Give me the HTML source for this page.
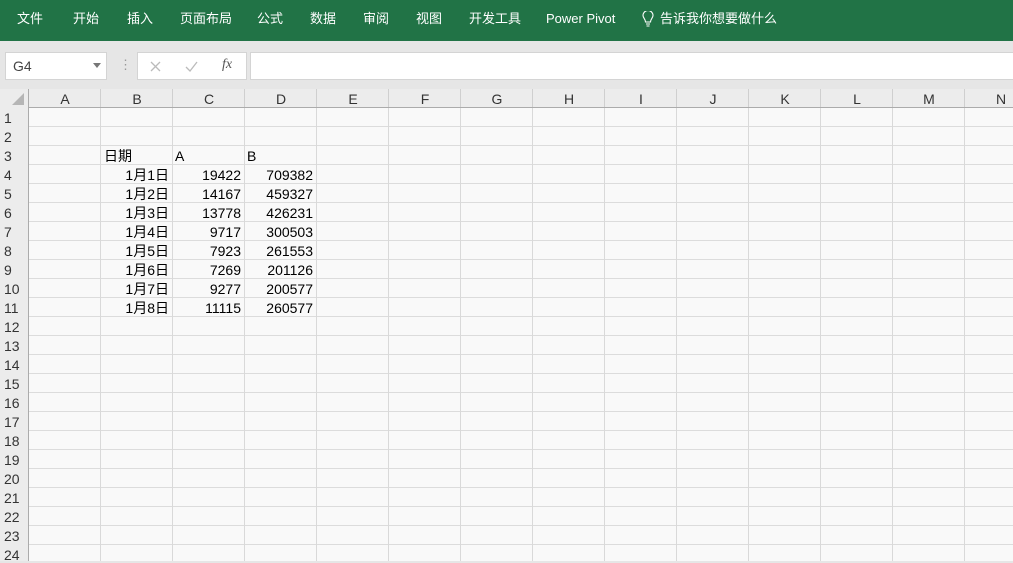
<!DOCTYPE html>
<html><head><meta charset="utf-8"><style>
*{margin:0;padding:0;box-sizing:border-box}
body{width:1013px;height:561px;overflow:hidden;background:#e6e6e6;font-family:"Liberation Sans","Noto Sans CJK SC",sans-serif;position:relative}
.top{position:absolute;left:0;top:0;width:1013px;height:41px;background:#217346;color:#fff;font-size:13px}
.top span{position:absolute;top:8px}
.top span.l{top:11px}
.fb{position:absolute;top:52px;height:28px;background:#fff;border:1px solid #d4d4d4}
.grid{position:absolute;left:29px;top:108px;width:984px;height:453px;background-color:#f9f9f9;
background-image:linear-gradient(to right,transparent 71px,#d9d9d9 71px),linear-gradient(to bottom,transparent 18px,#dcdcdc 18px);
background-size:72px 19px,72px 19px}
.ch{position:absolute;top:89px;left:29px;width:984px;height:19px;background:#ececec;border-bottom:1px solid #ababab;
background-image:linear-gradient(to right,transparent 71px,#cfcfcf 71px);background-size:72px 19px}
.ch span{position:absolute;width:72px;text-align:center;top:2px;font-size:14px;color:#333}
.rh{position:absolute;left:0;top:89px;width:29px;height:472px;background:#ececec;border-right:1px solid #ababab}
.rh span{position:absolute;left:4px;font-size:14px;color:#333}
.c{position:absolute;font-size:14px;color:#000;height:19px;line-height:19px}
.r{text-align:right;width:68px}
</style></head><body>
<div class="top">
<span style="left:17px">文件</span><span style="left:73px">开始</span><span style="left:127px">插入</span><span style="left:180px">页面布局</span><span style="left:257px">公式</span><span style="left:310px">数据</span><span style="left:363px">审阅</span><span style="left:416px">视图</span><span style="left:469px">开发工具</span><span class="l" style="left:546px">Power Pivot</span>
<svg style="position:absolute;left:642px;top:11px" width="12" height="16" viewBox="0 0 12 16"><path d="M3.5 11 C3.5 8 1 7 1 4.5 A5 5 0 0 1 11 4.5 C11 7 8.5 8 8.5 11 Z M4 13 H8 M4.5 15 H7.5" fill="none" stroke="#fff" stroke-width="1.1"/></svg>
<span style="left:660px">告诉我你想要做什么</span>
</div>
<div class="fb" style="left:5px;width:102px"><span style="position:absolute;left:7px;top:5px;font-size:14px;color:#444">G4</span><span style="position:absolute;left:87px;top:10px;border:4px solid transparent;border-top:5px solid #777"></span></div>
<span style="position:absolute;left:119px;top:57px;color:#999;font-size:13px">⋮</span>
<div class="fb" style="left:137px;width:110px">
<svg style="position:absolute;left:12px;top:8px" width="11" height="11"><path d="M1 1 L10 10 M10 1 L1 10" stroke="#bbb" stroke-width="1.3"/></svg>
<svg style="position:absolute;left:47px;top:8px" width="13" height="11"><path d="M1 6 L5 10 L12 1" fill="none" stroke="#bbb" stroke-width="1.3"/></svg>
<span style="position:absolute;left:84px;top:4px;color:#555;font-size:14px;font-style:italic;font-family:'Liberation Serif',serif">fx</span></div>
<div class="fb" style="left:250px;width:770px"></div>
<div class="ch">
<span style="left:0">A</span><span style="left:72px">B</span><span style="left:144px">C</span><span style="left:216px">D</span><span style="left:288px">E</span><span style="left:360px">F</span><span style="left:432px">G</span><span style="left:504px">H</span><span style="left:576px">I</span><span style="left:648px">J</span><span style="left:720px">K</span><span style="left:792px">L</span><span style="left:864px">M</span><span style="left:936px">N</span>
</div>
<div class="rh">
<svg style="position:absolute;left:12px;top:4px" width="12" height="12"><path d="M12 0 V12 H0 Z" fill="#b5b5b5"/></svg>
<span style="top:21px">1</span><span style="top:40px">2</span><span style="top:59px">3</span><span style="top:78px">4</span><span style="top:97px">5</span><span style="top:116px">6</span><span style="top:135px">7</span><span style="top:154px">8</span><span style="top:173px">9</span><span style="top:192px">10</span><span style="top:211px">11</span><span style="top:230px">12</span><span style="top:249px">13</span><span style="top:268px">14</span><span style="top:287px">15</span><span style="top:306px">16</span><span style="top:325px">17</span><span style="top:344px">18</span><span style="top:363px">19</span><span style="top:382px">20</span><span style="top:401px">21</span><span style="top:420px">22</span><span style="top:439px">23</span><span style="top:458px">24</span>
</div>
<div class="grid"></div>
<div class="c" style="left:104px;top:147px">日期</div><div class="c" style="left:175px;top:147px">A</div><div class="c" style="left:247px;top:147px">B</div>
<div class="c r" style="left:101px;top:166px">1月1日</div><div class="c r" style="left:173px;top:166px">19422</div><div class="c r" style="left:245px;top:166px">709382</div>
<div class="c r" style="left:101px;top:185px">1月2日</div><div class="c r" style="left:173px;top:185px">14167</div><div class="c r" style="left:245px;top:185px">459327</div>
<div class="c r" style="left:101px;top:204px">1月3日</div><div class="c r" style="left:173px;top:204px">13778</div><div class="c r" style="left:245px;top:204px">426231</div>
<div class="c r" style="left:101px;top:223px">1月4日</div><div class="c r" style="left:173px;top:223px">9717</div><div class="c r" style="left:245px;top:223px">300503</div>
<div class="c r" style="left:101px;top:242px">1月5日</div><div class="c r" style="left:173px;top:242px">7923</div><div class="c r" style="left:245px;top:242px">261553</div>
<div class="c r" style="left:101px;top:261px">1月6日</div><div class="c r" style="left:173px;top:261px">7269</div><div class="c r" style="left:245px;top:261px">201126</div>
<div class="c r" style="left:101px;top:280px">1月7日</div><div class="c r" style="left:173px;top:280px">9277</div><div class="c r" style="left:245px;top:280px">200577</div>
<div class="c r" style="left:101px;top:299px">1月8日</div><div class="c r" style="left:173px;top:299px">11115</div><div class="c r" style="left:245px;top:299px">260577</div>
</body></html>
